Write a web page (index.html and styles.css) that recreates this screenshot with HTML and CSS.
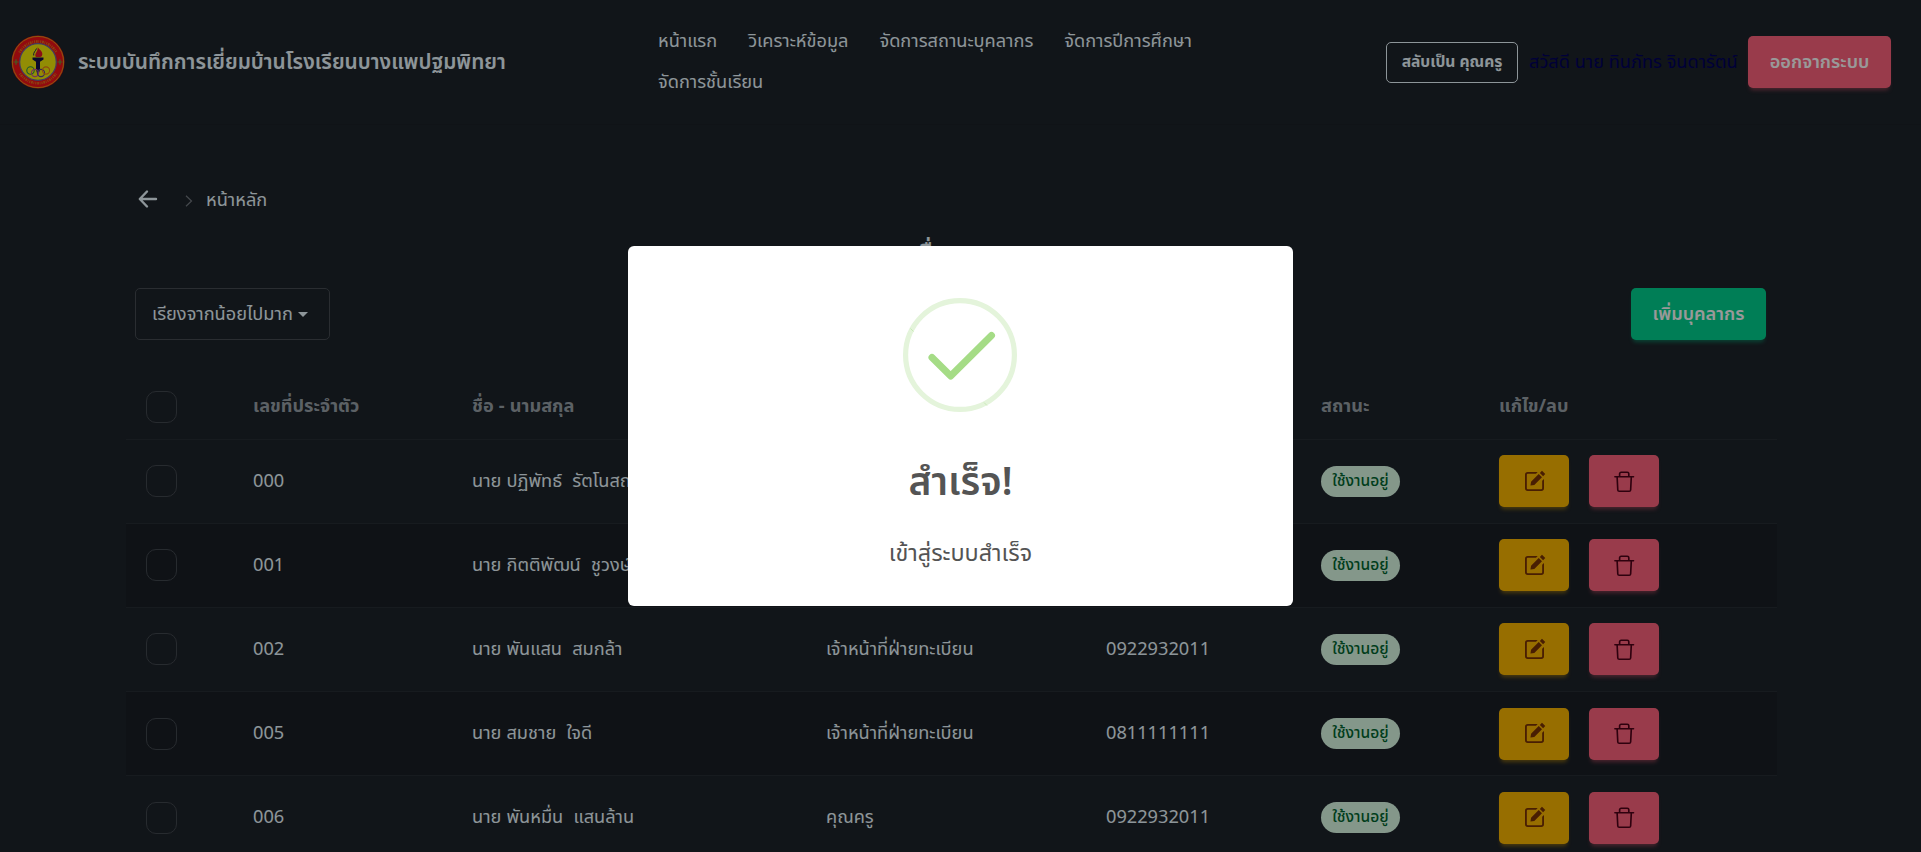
FILE: index.html
```html
<!DOCTYPE html>
<html lang="th">
<head>
<meta charset="utf-8">
<title>ระบบบันทึกการเยี่ยมบ้าน</title>
<link rel="stylesheet" href="styles.css">
</head>
<body>
<svg class="sprite" aria-hidden="true">
  <symbol id="edit" viewBox="0 0 24 24"><path fill="currentColor" d="M19 20H5a1 1 0 0 1-1-1V5a1 1 0 0 1 1-1h8.600l1.700-1.900H5A2.900 2.900 0 0 0 2.100 5v14A2.900 2.900 0 0 0 5 21.900h14a2.900 2.900 0 0 0 2.900-2.900V9.500L20 11.300V19a1 1 0 0 1-1 1z"/><path fill="currentColor" d="M7.800 16.200l.6-4 8-8 3.400 3.400-8 8zM17.600 3.100l2.200-2.200 3.400 3.400-2.200 2.200z"/></symbol>
  <symbol id="trash" viewBox="0 0 24 24"><path fill="none" stroke="currentColor" stroke-width="1.700" stroke-linejoin="round" stroke-linecap="round" d="M2 7h19.400M6.900 6.800V4a1.600 1.600 0 0 1 1.600-1.600h6.400A1.600 1.600 0 0 1 16.500 4v2.800M4.300 7.200l.7 13.600a1.500 1.500 0 0 0 1.500 1.400h10.400a1.500 1.500 0 0 0 1.500-1.400l.7-13.600"/></symbol>
</svg>
<header class="navbar">
  <div class="brand">
    <svg class="logo" viewBox="0 0 54 54">
      <circle cx="27" cy="27" r="26.500" fill="#f31218"/>
      <circle cx="27" cy="27" r="25.600" fill="none" stroke="#e8a414" stroke-width=".9"/>
      <circle cx="27" cy="27" r="18.300" fill="#f4ec08" stroke="#6d65a0" stroke-width="1.200"/>
      <path d="M8.500 17.500A21 21 0 0 1 45.500 17.500M9 38.500a21.500 21.500 0 0 0 36 0" fill="none" stroke="#e59a1c" stroke-width="2.600" stroke-dasharray="1 .9 1.700 .8 .7 1.100" opacity=".7"/>
      <path d="M2.500 27h5M5 24.300v5.400M46.500 27h5M49 24.300v5.400" stroke="#6f9b3c" stroke-width="1.200"/>
      <path d="M26.500 11c-1 2 5.500 4.500 4.800 8.500-.3 1.800-1.300 2.500-2 2.500h-4.500c-2-4 3-5 1.700-11z" fill="#e81824"/>
      <path d="M25.500 13.500c-.8 2.500-3.500 4-2.800 7" fill="none" stroke="#20205a"/>
      <path d="M21.500 22.500h11v2l-3.500 2.300v7.200l-.8 3.500h-2.400l-.8-3.500v-7.200l-3.500-2.300z" fill="#11114c"/>
      <g fill="none" stroke-width="1.100"><circle cx="19.500" cy="35.500" r="3.700" stroke="#28954d"/><circle cx="24" cy="38" r="3.600" stroke="#c65595"/><circle cx="30" cy="38" r="3.600" stroke="#604096"/><circle cx="35" cy="35.500" r="3.600" stroke="#ee7b18"/></g>
    </svg>
    <span class="brand-name">ระบบบันทึกการเยี่ยมบ้านโรงเรียนบางแพปฐมพิทยา</span>
  </div>
  <nav class="menu">
    <a>หน้าแรก</a><a>วิเคราะห์ข้อมูล</a><a>จัดการสถานะบุคลากร</a><a>จัดการปีการศึกษา</a><a>จัดการชั้นเรียน</a>
  </nav>
  <div class="account">
    <button class="btn-outline">สลับเป็น คุณครู</button>
    <span class="greeting">สวัสดี นาย ทินภัทร จินดารัตน์</span>
    <button class="btn error logout">ออกจากระบบ</button>
  </div>
</header>
<main class="page">
  <div class="crumbs">
    <svg class="back" viewBox="0 0 20 20"><path d="M18 10H2.500M9 2.500 1.800 10l7.200 7.500" fill="none" stroke="currentColor" stroke-width="2.400" stroke-linecap="round" stroke-linejoin="round"/></svg>
    <svg class="chev" viewBox="0 0 8 12"><path d="M1 .8 6.500 6 1 11.200" fill="none" stroke="currentColor" stroke-width="1.200"/></svg>
    <span>หน้าหลัก</span>
  </div>
  <h1 class="heading">รายชื่อบุคลากร</h1>
  <div class="tools">
    <button class="sort">เรียงจากน้อยไปมาก<i class="caret"></i></button>
    <button class="btn success add">เพิ่มบุคลากร</button>
  </div>
  <div class="table">
    <div class="row head"><i class="check"></i><span>เลขที่ประจำตัว</span><span>ชื่อ - นามสกุล</span><span>ตำแหน่ง</span><span>เบอร์โทร</span><span>สถานะ</span><span>แก้ไข/ลบ</span></div>
    <div class="row"><i class="check"></i><span>000</span><span>นาย ปฏิพัทธ์&nbsp; รัตโนสถ</span><span></span><span></span><span class="badge">ใช้งานอยู่</span><div class="acts"><button class="btn warning"><svg><use href="#edit"/></svg></button><button class="btn error"><svg><use href="#trash"/></svg></button></div></div>
    <div class="row alt"><i class="check"></i><span>001</span><span>นาย กิตติพัฒน์&nbsp; ชูวงษ์</span><span></span><span></span><span class="badge">ใช้งานอยู่</span><div class="acts"><button class="btn warning"><svg><use href="#edit"/></svg></button><button class="btn error"><svg><use href="#trash"/></svg></button></div></div>
    <div class="row"><i class="check"></i><span>002</span><span>นาย พันแสน&nbsp; สมกล้า</span><span>เจ้าหน้าที่ฝ่ายทะเบียน</span><span>0922932011</span><span class="badge">ใช้งานอยู่</span><div class="acts"><button class="btn warning"><svg><use href="#edit"/></svg></button><button class="btn error"><svg><use href="#trash"/></svg></button></div></div>
    <div class="row alt"><i class="check"></i><span>005</span><span>นาย สมชาย&nbsp; ใจดี</span><span>เจ้าหน้าที่ฝ่ายทะเบียน</span><span>0811111111</span><span class="badge">ใช้งานอยู่</span><div class="acts"><button class="btn warning"><svg><use href="#edit"/></svg></button><button class="btn error"><svg><use href="#trash"/></svg></button></div></div>
    <div class="row"><i class="check"></i><span>006</span><span>นาย พันหมื่น&nbsp; แสนล้าน</span><span>คุณครู</span><span>0922932011</span><span class="badge">ใช้งานอยู่</span><div class="acts"><button class="btn warning"><svg><use href="#edit"/></svg></button><button class="btn error"><svg><use href="#trash"/></svg></button></div></div>
  </div>
</main>
<div class="overlay">
  <div class="modal">
    <svg class="ok" viewBox="0 0 114 114"><circle cx="57" cy="57" r="54.400" fill="none" stroke="#e4f4db" stroke-width="5.200"/><path d="m7.500 30.500 3 3M81 104.500l3 3" stroke="#c9eab8"/><path d="M29 59.500 47.700 78 88.500 37.500" fill="none" stroke="#a5dc86" stroke-width="7" stroke-linecap="round" stroke-linejoin="round"/></svg>
    <h2>สำเร็จ!</h2>
    <p>เข้าสู่ระบบสำเร็จ</p>
  </div>
</div>
</body>
</html>
```
FILE: styles.css
```css
* { box-sizing: border-box; margin: 0; padding: 0; }
body {
  height: 852px;
  overflow: hidden;
  background: #1d232a;
  color: #ecf9ff;
  font: 18.2px/1.43 "Noto Sans", "Noto Sans Thai", sans-serif;
}
button { font: inherit; color: inherit; background: none; border: 0; }
.sprite { position: absolute; width: 0; height: 0; }
.navbar { display: flex; align-items: center; height: 125px; border-bottom: 1px solid #1b2027; padding: 0 30px 0 11px; }
.brand { display: flex; align-items: center; gap: 13px; width: 647px; }
.logo { width: 54px; height: 54px; }
.brand-name { font-size: 20.8px; font-weight: 600; white-space: nowrap; }
.menu { display: flex; flex-wrap: wrap; gap: 15px 31px; width: 560px; padding-bottom: 3px; }
.menu a { line-height: 26px; white-space: nowrap; }
.account { display: flex; align-items: center; margin-left: auto; white-space: nowrap; }
.btn-outline { width: 132px; height: 41px; padding-bottom: 2px; border: 1px solid #ecf9ff; border-radius: 5px; font-size: 15.6px; font-weight: 700; }
.greeting { width: 208px; margin: 0 11px; padding-bottom: 2px; color: #00005e; }
.btn { display: flex; align-items: center; justify-content: center; width: 70px; height: 52px; border-radius: 5px; font-weight: 600; }
.btn svg { width: 23px; height: 23px; }
.error { background: #ff637d; box-shadow: 0 4px 4px -2px rgba(255, 99, 125, .45); color: #4d0218; }
.warning { background: #fcb700; box-shadow: 0 4px 4px -2px rgba(252, 183, 0, .45); color: #793205; }
.success { background: #00d390; box-shadow: 0 4px 4px -2px rgba(0, 211, 144, .45); }
.logout { width: 143px; padding-bottom: 1px; color: #fff; }
.add { width: 135px; padding-bottom: 1px; color: #fff; }
.page { width: 1651px; margin-left: 126px; }
.crumbs { display: flex; align-items: center; height: 26px; margin-top: 61px; padding-left: 12px; }
.crumbs span { padding-bottom: 1px; }
.back { width: 20px; height: 20px; }
.chev { width: 8px; height: 12px; margin: 4px 13px 0 27px; color: #737a80; }
.heading { height: 40px; margin-top: 23px; padding-left: 5px; text-align: center; font-size: 23.4px; font-weight: 600; line-height: 35px; }
.tools { display: flex; justify-content: space-between; margin-top: 13px; padding: 0 11px 0 9px; }
.sort { display: flex; align-items: center; width: 195px; height: 52px; padding: 0 0 2px 16px; border: 1px solid #464c53; border-radius: 5px; white-space: nowrap; }
.caret { margin: 3px 0 0 5px; border: 5px solid transparent; border-top-color: #ecf9ff; border-bottom: 0; }
.table { margin-top: 35px; }
.row { display: grid; grid-template-columns: 107px 219px 354px 280px 215px 178px 1fr; align-items: center; height: 84.2px; padding-left: 20px; border-bottom: 1px solid #272d34; white-space: nowrap; word-spacing: .4px; }
.row > span:not(.badge) { padding-bottom: 3px; }
.head { height: 64.5px; color: #99a2a9; font-weight: 700; }
.alt { background: #1a1f26; }
.check { width: 31px; height: 32px; border: 1px solid #42484f; border-radius: 10px; }
.badge { width: 79px; height: 31px; border-radius: 16px; background: #dcfce7; color: #016630; font-size: 15.600px; font-weight: 500; line-height: 29px; text-align: center; }
.acts { display: flex; gap: 20px; }
.overlay { position: absolute; inset: 0; display: flex; align-items: center; justify-content: center; background: rgba(0, 0, 0, .4); }
.modal { display: flex; flex-direction: column; align-items: center; width: 665px; height: 360px; padding-top: 52px; border-radius: 6px; background: #fff; color: #545454; }
.ok { width: 114px; height: 114px; margin-right: 2px; }
.modal h2 { margin-top: 39px; font-size: 39px; font-weight: 600; line-height: 58px; }
.modal p { margin-top: 26px; font-size: 23.400px; line-height: 35px; }
```
